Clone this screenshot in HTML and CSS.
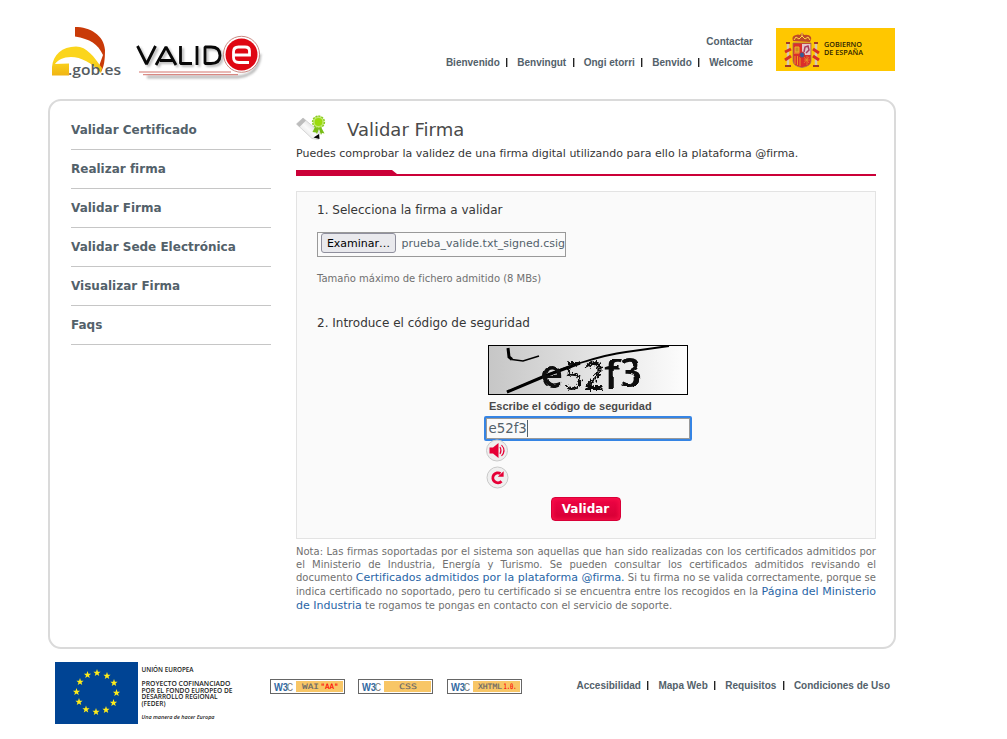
FILE: index.html
```html
<!DOCTYPE html>
<html lang="es">
<head>
<meta charset="utf-8">
<title>Validar Firma - VALIDe</title>
<link rel="stylesheet" href="styles.css">
</head>
<body>
<div class="page">
  <header class="header">
    <svg class="brand" width="240" height="75" viewBox="0 0 240 75" role="img" aria-label="VALIDe .gob.es">
      <defs>
        <filter id="soft" x="-10%" y="-10%" width="120%" height="130%"><feGaussianBlur stdDeviation=".9"/></filter>
        <linearGradient id="gold" x1="0" y1="0" x2="0" y2="1"><stop offset=".5" stop-color="#fbd51c"/><stop offset="1" stop-color="#f0b414"/></linearGradient>
      </defs>
      <path d="M35 12C50 12 64 20 65 35C65 45 64 52 61 57L58 54L63 40C58 29 50 24 35 21.500Z" fill="#c93a08"/>
      <path d="M12 60.500V52C13 40 22 31.500 36 31.500C47 31.500 54 42 62 53L61 58C52 48 41 42 31 42C23 42 18 45 15 49L29 48.500V60.500Z" fill="url(#gold)"/>
      <text x="28" y="59.500" class="gob" textLength="53" lengthAdjust="spacingAndGlyphs">.gob.es</text>
      <g class="letters shadow" transform="translate(2 2)" filter="url(#soft)"><path d="M97.500 31L106.500 49L115.500 31M116 50L126 32L136 50M120 45.500H133M140.500 31V48.500H152M157 31V50M165 32H171Q180 32 180 40.500Q180 48.500 171 48.500H165Z"/></g>
      <g class="letters"><path d="M97.500 31L106.500 49L115.500 31M116 50L126 32L136 50M120 45.500H133M140.500 31V48.500H152M157 31V50M165 32H171Q180 32 180 40.500Q180 48.500 171 48.500H165Z"/></g>
      <path d="M107 62H198Q219 60 220 39" fill="none" stroke="#bbb" stroke-width="3" filter="url(#soft)"/>
      <circle cx="201.500" cy="39.300" r="18" fill="#fff" stroke="#bd6d65" stroke-width=".8"/>
      <path d="M99 57H191M103 59.700H198" stroke="#c84e45" stroke-width=".8"/>
      <circle cx="201.500" cy="39.500" r="16" fill="#df0713"/>
      <path d="M209 47.500H199Q193.500 47.500 193.500 42.500V37Q193.500 32 198.500 32H205Q209.500 32 209.500 36V40H194" fill="none" stroke="#fff" stroke-width="2.800"/>
    </svg>
    <nav class="top-nav">
      <a>Contactar</a>
      <ul class="links"><li>Bienvenido</li><li>Benvingut</li><li>Ongi etorri</li><li>Benvido</li><li>Welcome</li></ul>
    </nav>
    <svg class="government" width="119" height="43" viewBox="0 0 119 43" role="img" aria-label="Gobierno de España">
      <rect width="119" height="43" fill="#ffc700"/>
      <path d="M17 13Q15 8 20 7Q22 6 24 7L26 4L28 7Q33 6 35 9Q36 11 34 14Z" fill="#bd4b28"/>
      <path d="M18 12L20 9L23 11L26 8L29 11L32 9L34 12M26 4V8" fill="none" stroke="#ffd94a" stroke-width="1"/>
      <path d="M12 16V37M40 16V37" stroke="#d5c9af" stroke-width="2.500"/>
      <path d="M10 15H14M38 15H42M9 38H15M37 38H43" stroke="#a03b28" stroke-width="2"/>
      <path d="M9 24L15 21M37 21L43 25M9 32L15 28M37 28L43 32" stroke="#d63025" stroke-width="3"/>
      <path d="M17 15H35V33Q35 38 26 39.500Q17 38 17 33Z" fill="#dc2e2a" stroke="#9b7559" stroke-width=".8"/>
      <path d="M26 16H34.500V27H26Z" fill="#e4c7cb"/>
      <path d="M19 24V19H23V24ZM18 25H24" fill="#cf8a20" stroke="#efb031"/>
      <path d="M28 24L29 19L32 18L33 22L30 25" fill="none" stroke="#a83c5c" stroke-width="1.500"/>
      <path d="M19 28V36M21.500 28V37M24 29V38" stroke="#f3af23" stroke-width=".8"/>
      <path d="M28 29L33 35M33 29L28 35M28 32H34M31 28V37" stroke="#eaa52c" stroke-width=".6"/>
      <ellipse cx="26" cy="27" rx="2.500" ry="3" fill="#345c96" stroke="#d12f2c"/>
      <text x="48" y="19" textLength="38" lengthAdjust="spacingAndGlyphs">GOBIERNO</text>
      <text x="48" y="26.500" textLength="39" lengthAdjust="spacingAndGlyphs">DE ESPAÑA</text>
    </svg>
  </header>

  <div class="panel">
    <ul class="menu">
      <li>Validar Certificado</li><li>Realizar firma</li><li>Validar Firma</li><li>Validar Sede Electrónica</li><li>Visualizar Firma</li><li>Faqs</li>
    </ul>
    <main class="main">
      <div class="heading">
        <svg width="30" height="28" viewBox="0 0 30 28" aria-hidden="true">
          <defs><linearGradient id="pen" x1="0" y1="1" x2="1" y2="0"><stop stop-color="#ccc"/><stop offset=".5" stop-color="#fafafa"/><stop offset="1" stop-color="#bbb"/></linearGradient></defs>
          <path d="M.5 9L7 3L23.500 17L22.500 24.500L16 23.500Z" fill="url(#pen)" stroke="#c8c8c8" stroke-width=".7"/>
          <path d="M.5 9L7 3L10 5.500L3.500 12Z" fill="#bcbcbc"/>
          <path d="M17.500 22.500L23 19L23.500 24Z" fill="#050505"/>
          <path d="M19 12L16.500 17L20 17.500L21 19L23 14L25 20L26 18L28.500 18.500L25 12" fill="#79bd18"/>
          <circle cx="22.500" cy="7" r="5.900" fill="#c4e977" stroke="#8bcc22" stroke-width="1.500" stroke-dasharray="2 1"/>
          <circle cx="22.500" cy="7" r="3.900" fill="#9bdb0c"/>
        </svg>
        <h1>Validar Firma</h1>
      </div>
      <p class="intro">Puedes comprobar la validez de una firma digital utilizando para ello la plataforma @firma.</p>
      <svg class="rule" width="580" height="6" viewBox="0 0 580 6" aria-hidden="true"><path d="M0 0H96L101 4H580V6H0Z" fill="#cb0038"/></svg>
      <form class="form">
        <h2>1. Selecciona la firma a validar</h2>
        <div class="file"><span class="browse">Examinar…</span><span class="filename">prueba_valide.txt_signed.csig</span></div>
        <p class="hint">Tamaño máximo de fichero admitido (8 MBs)</p>
        <h2 class="second">2. Introduce el código de seguridad</h2>
        <div class="security">
          <svg class="captcha" width="200" height="50" viewBox="0 0 200 50" role="img" aria-label="e52f3">
            <defs>
              <linearGradient id="grey"><stop stop-color="#c6c6c6"/><stop offset="1" stop-color="#fdfdfd"/></linearGradient>
              <filter id="rough"><feTurbulence type="fractalNoise" baseFrequency=".5" numOctaves="2" seed="5"/><feDisplacementMap in="SourceGraphic" scale="8" xChannelSelector="R" yChannelSelector="G"/><feGaussianBlur stdDeviation=".35"/></filter>
              <filter id="wave"><feTurbulence type="fractalNoise" baseFrequency=".12" numOctaves="1" seed="3"/><feDisplacementMap in="SourceGraphic" scale="4" xChannelSelector="R" yChannelSelector="G"/><feGaussianBlur stdDeviation=".5"/></filter>
            </defs>
            <rect x=".5" y=".5" width="199" height="49" fill="url(#grey)" stroke="#000"/>
            <path d="M19 47L57 31Q78 22 92 18Q121 9 138 7L181 1" fill="none" stroke="#000" stroke-width="1.800"/>
            <path d="M19 47L57 31L92 18" fill="none" stroke="#000" stroke-width="3"/>
            <path d="M20 3L21 12L24 14.500" fill="none" stroke="#000" stroke-width="3"/>
            <path d="M24 14.500L35 16L51 11" fill="none" stroke="#000" stroke-width="1.500"/>
            <g filter="url(#wave)">
              <text class="heavy" x="53" y="43" textLength="22" lengthAdjust="spacingAndGlyphs">e</text>
              <text class="heavy" x="116" y="42.500" textLength="16" lengthAdjust="spacingAndGlyphs">f</text>
              <text class="heavy" x="132" y="42" textLength="21" lengthAdjust="spacingAndGlyphs">3</text>
            </g>
            <g filter="url(#rough)">
              <text class="thin" x="77" y="45" textLength="18" lengthAdjust="spacingAndGlyphs">5</text>
              <text class="heavy" x="96" y="45" textLength="20" lengthAdjust="spacingAndGlyphs">2</text>
            </g>
          </svg>
          <label for="code">Escribe el código de seguridad</label>
          <div class="code" id="code">e52f3<span class="caret"></span></div>
          <div class="tools">
            <svg width="23" height="23" viewBox="0 0 23 23"><circle cx="11" cy="11.500" r="10.500" fill="#efefef" stroke="#c9c9c9"/><path d="M3.500 8.500H7L12.500 4V19L7 14.500H3.500Z" fill="#e60036"/><path d="M14 8Q16 11.500 14 15M15.500 6Q20.500 11.500 15.500 17" fill="none" stroke="#e60036" stroke-width="1.100"/></svg>
            <svg width="23" height="23" viewBox="0 0 23 23"><circle cx="11.500" cy="11.500" r="10.500" fill="#efefef" stroke="#c9c9c9"/><path d="M15.500 15.300A5 5 0 1 1 14.500 7.600" fill="none" stroke="#e60036" stroke-width="2.900"/><path d="M17.600 5.300V10.800H11.800Z" fill="#e60036"/></svg>
          </div>
        </div>
        <button type="button" class="submit">Validar</button>
      </form>
      <p class="note">Nota: Las firmas soportadas por el sistema son aquellas que han sido realizadas con los certificados admitidos por el Ministerio de Industria, Energía y Turismo. Se pueden consultar los certificados admitidos revisando el documento <a>Certificados admitidos por la plataforma @firma.</a> Si tu firma no se valida correctamente, porque se indica certificado no soportado, pero tu certificado si se encuentra entre los recogidos en la <a>Página del Ministerio de Industria</a> te rogamos te pongas en contacto con el servicio de soporte.</p>
    </main>
  </div>

  <footer class="footer">
    <svg class="europe" width="180" height="62" viewBox="0 0 180 62" role="img" aria-label="Unión Europea">
      <defs><path id="star" d="M0-3.900L.95-1.200L3.600-1.200L1.500.5L2.250 3.100L0 1.550L-2.250 3.100L-1.500.5L-3.600-1.200L-.95-1.200Z" fill="#ffec19"/></defs>
      <rect width="83" height="62" fill="#004494"/>
      <use href="#star" x="42" y="11"/><use href="#star" x="52" y="14"/><use href="#star" x="59" y="21"/><use href="#star" x="61.500" y="31"/><use href="#star" x="58.500" y="41"/><use href="#star" x="51" y="48"/><use href="#star" x="41" y="50"/><use href="#star" x="31" y="47.500"/><use href="#star" x="24" y="40"/><use href="#star" x="21.500" y="30"/><use href="#star" x="25" y="20"/><use href="#star" x="32.500" y="13"/>
      <text x="86.500" y="10" textLength="52" lengthAdjust="spacingAndGlyphs">UNIÓN EUROPEA</text>
      <text x="86.500" y="24" textLength="89" lengthAdjust="spacingAndGlyphs">PROYECTO COFINANCIADO</text>
      <text x="86.500" y="30.500" textLength="91" lengthAdjust="spacingAndGlyphs">POR EL FONDO EUROPEO DE</text>
      <text x="86.500" y="37" textLength="76" lengthAdjust="spacingAndGlyphs">DESARROLLO REGIONAL</text>
      <text x="86.500" y="43.500" textLength="24" lengthAdjust="spacingAndGlyphs">(FEDER)</text>
      <text x="86.500" y="57" class="slogan" textLength="73" lengthAdjust="spacingAndGlyphs">Una manera de hacer Europa</text>
    </svg>
    <div class="badges">
      <svg width="75" height="15" viewBox="0 0 75 15"><rect x=".5" y=".5" width="74" height="14" fill="#fff" stroke="#666"/><rect x="26" y="2" width="47" height="11" fill="#f8c666"/><text class="w3" x="4" y="11.500" textLength="14" lengthAdjust="spacingAndGlyphs">W3</text><text class="w3 c" x="17" y="11.500" textLength="6" lengthAdjust="spacingAndGlyphs">C</text><text class="tag" x="32" y="10" textLength="17" lengthAdjust="spacingAndGlyphs">WAI</text><text class="tag red" x="50.500" y="10" textLength="18" lengthAdjust="spacingAndGlyphs">"AA"</text></svg>
      <svg width="75" height="15" viewBox="0 0 75 15"><rect x=".5" y=".5" width="74" height="14" fill="#fff" stroke="#666"/><rect x="26" y="2" width="47" height="11" fill="#f8c666"/><text class="w3" x="4" y="11.500" textLength="14" lengthAdjust="spacingAndGlyphs">W3</text><text class="w3 c" x="17" y="11.500" textLength="6" lengthAdjust="spacingAndGlyphs">C</text><text class="tag" x="41" y="10" textLength="18" lengthAdjust="spacingAndGlyphs">CSS</text></svg>
      <svg class="last" width="75" height="15" viewBox="0 0 75 15"><rect x=".5" y=".5" width="74" height="14" fill="#fff" stroke="#666"/><rect x="26" y="2" width="47" height="11" fill="#f8c666"/><text class="w3" x="4" y="11.500" textLength="14" lengthAdjust="spacingAndGlyphs">W3</text><text class="w3 c" x="17" y="11.500" textLength="6" lengthAdjust="spacingAndGlyphs">C</text><text class="tag" x="31" y="10" textLength="24" lengthAdjust="spacingAndGlyphs">XHTML</text><text class="tag red" x="56.500" y="10" textLength="13" lengthAdjust="spacingAndGlyphs">1.0.</text></svg>
    </div>
    <ul class="links"><li>Accesibilidad</li><li>Mapa Web</li><li>Requisitos</li><li>Condiciones de Uso</li></ul>
  </footer>
</div>
</body>
</html>
```
FILE: styles.css
```css
* { box-sizing: border-box; margin: 0; padding: 0; }
body { background: #fff; color: #363636; font-family: "DejaVu Sans", Verdana, sans-serif; overflow: hidden; }
svg { display: block; flex: none; }
ul { list-style: none; }
.page { width: 848px; margin-left: 48px; }
.header { display: flex; height: 99px; padding-right: 1px; }
.brand { margin: 15px 0 0 -8px; }
.gob { font: 600 15px "Open Sans", sans-serif; fill: #555b60; }
.letters { fill: none; stroke: #080808; stroke-width: 2.8px; stroke-linejoin: bevel; }
.letters.shadow { stroke: #bbb; }
.top-nav { display: flex; flex-direction: column; align-items: flex-end; gap: 9px; margin: 36px 23px 0 auto; }
.top-nav, .links { color: #53616a; font: bold 10px/12px "Liberation Sans", Arial, sans-serif; }
.links { display: flex; white-space: nowrap; }
.links li + li::before { content: ""; display: inline-block; width: 1px; height: 9px; margin: 0 10px 0 6.500px; background: #222; box-shadow: 1px 0 #aaa; vertical-align: -1px; }
.government { margin-top: 28px; }
.government text { font: 600 7px "Open Sans", sans-serif; fill: #302500; }
.panel { display: flex; gap: 25px; height: 550px; padding: 10px 18px 0 21px; border: 2px solid #dadada; border-radius: 13px; }
.menu { width: 200px; flex: none; }
.menu li { height: 39px; border-bottom: 1px solid #c6c6c6; color: #53616a; font-size: 12px; font-weight: bold; line-height: 38px; }
.main { width: 580px; flex: none; padding-top: 3px; }
.heading { display: flex; gap: 21px; height: 31px; }
.heading svg { margin-top: 1px; }
h1 { color: #4a4a4a; font-size: 18px; font-weight: normal; line-height: 31px; }
.intro { padding-top: 1px; font-size: 11px; line-height: 16px; white-space: nowrap; }
.rule { margin-top: 8px; }
.form { display: flex; flex-direction: column; height: 348px; margin-top: 15px; padding: 10px 20px 0; border: 1px solid #e3e3e3; background: #fafafa; }
h2 { font-size: 12px; font-weight: normal; line-height: 16px; }
.file { display: flex; width: 249px; height: 25px; margin-top: 14px; padding-left: 3px; border: 1px solid #999; overflow: hidden; color: #53616a; font-size: 11px; line-height: 22px; white-space: nowrap; }
.browse { flex: none; width: 75px; height: 20px; border: 1px solid #8f8f9d; border-radius: 3px; background: #e9e9ed; color: #000; line-height: 20px; text-align: center; }
.filename { margin-left: 5.500px; }
.hint { margin-top: 15px; color: #707070; font-size: 10px; line-height: 14px; }
.second { margin-top: 29px; }
.security { display: flex; flex-direction: column; width: 208px; margin: 14px 0 0 167px; }
.captcha { margin-left: 4px; }
.captcha text { font-family: "Open Sans", sans-serif; fill: #080808; }
.captcha .heavy { font-size: 40px; font-weight: 600; }
.captcha .thin { font-size: 38px; font-weight: 400; }
label { margin: 4px 0 3px 5px; color: #4a4a4a; font: bold 11px/14px "Liberation Sans", Arial, sans-serif; white-space: nowrap; }
.code { display: flex; height: 25px; padding-left: 2.500px; border: 2px solid #3584e4; border-radius: 2px; box-shadow: inset 0 0 0 1px #999; background: #fafafa; color: #53616a; font-size: 13.333px; line-height: 21px; }
.caret { width: 1px; height: 17px; margin: 2px 0 0 .5px; background: #53616a; }
.tools { display: grid; gap: 4px; margin: -2px 0 0 2px; }
.submit { width: 70px; height: 24px; margin: 8px 0 0 233.500px; border: 1px solid #d90038; border-radius: 4px; background: linear-gradient(#ee0445, #d50034); box-shadow: inset 0 0 4px 1px #fb1149; color: #fff; font: bold 12px/20px "DejaVu Sans", sans-serif; }
.note { margin-top: 5px; padding-top: .7px; color: #707070; font-size: 10px; line-height: 1.3; text-align: justify; }
.note a { color: #2865a6; font-size: 11px; }
.footer { display: flex; padding: 13px 6px 0 7px; }
.europe text { font: 600 6.500px "Open Sans", sans-serif; fill: #222; }
.europe .slogan { font: italic 600 6px "Open Sans", sans-serif; }
.badges { display: flex; gap: 13px; margin: 17px 0 0 35px; }
.badges .last { margin-left: 1px; }
.w3 { font: bold 11px "Liberation Sans", sans-serif; fill: #3168a2; }
.w3.c { fill: #777; font-weight: normal; }
.tag { font: 7.500px "DejaVu Sans Mono", monospace; fill: #666; stroke: #666; stroke-width: .15px; }
.tag.red { fill: #f00; stroke: #f00; }
.footer .links { margin: 18px 0 0 auto; }
```
